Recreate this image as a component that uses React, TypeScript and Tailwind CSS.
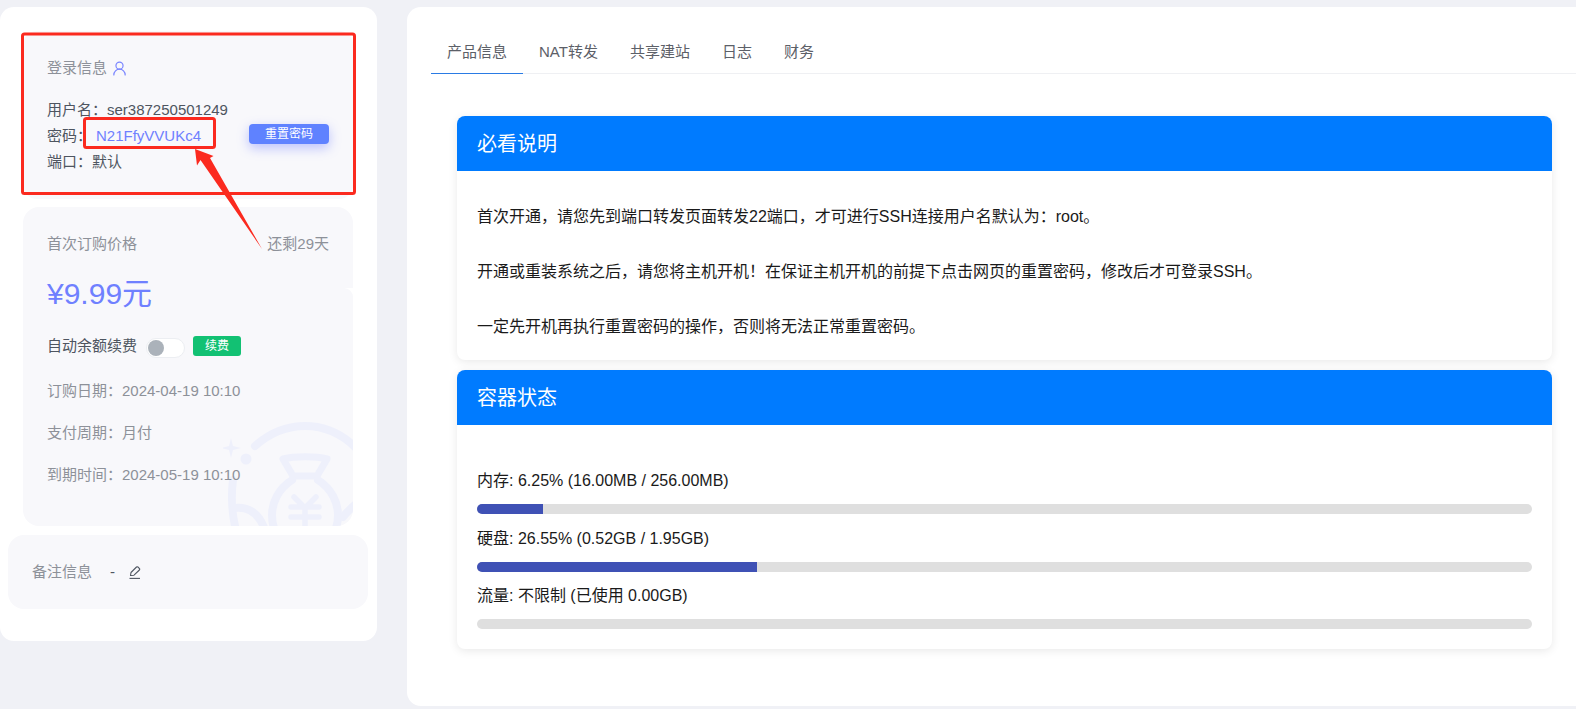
import React from "react";
import { UserRound } from "lucide-react";

const font = "font-['Liberation_Sans','Noto_Sans_CJK_SC',sans-serif]";

function MoneyBag() {
    return (
        <svg className="absolute right-0 bottom-0 h-[110px] w-[130px]" viewBox="223 416 130 110" fill="none" stroke="#eef0fb" strokeLinecap="round" strokeLinejoin="round">
            <path d="M255 446 C272 431 290 426 305 426 C325 426 342 434 356 448" strokeWidth="8" />
            <circle cx="246" cy="459" r="5.5" fill="#eef0fb" stroke="none" />
            <path d="M231 438 L233 446 L241 448 L233 450 L231 458 L229 450 L221 448 L229 446 Z" fill="#eef0fb" stroke="none" />
            <path d="M233 480 C231 495 232 515 236 530" strokeWidth="8" />
            <path d="M234 508 C248 506 259 513 265 530" strokeWidth="8" />
            <path d="M283 459 C295 456 316 456 327 459 L317 476 L293 476 Z" strokeWidth="7" />
            <path d="M292 480 C278 489 272 503 272 515 C272 520 273 526 275 530" strokeWidth="8" />
            <path d="M318 480 C332 489 338 503 338 515 C338 520 337 526 335 530" strokeWidth="8" />
            <path d="M343 517 C347 512 351 508 356 504" strokeWidth="8" />
            <path d="M294 497 L305 508 L316 497 M291 507 H319 M291 517 H319 M305 508 V530" strokeWidth="5.5" />
        </svg>
    );
}

function Annotation() {
    return (
        <svg className="pointer-events-none absolute top-0 left-0 z-20 h-[709px] w-[400px]" viewBox="0 0 400 709" fill="none">
            <rect x="22.5" y="34" width="332" height="159.5" rx="2" stroke="#fb2a1f" strokeWidth="3" />
            <rect x="84.5" y="118.5" width="130" height="29" rx="2" stroke="#fb2a1f" strokeWidth="3" />
            <path d="M195 149 L213.5 156 L210 158 L262 249 L200.5 160 L197 165.5 Z" fill="#fb2a1f" />
        </svg>
    );
}

function Bar({ label, value }: { label: string; value: number }) {
    return (
        <div>
            <div className="h-[24px] text-[16px] leading-[24px] text-[#1a1a1a]">{label}</div>
            <div className="mt-[11px] h-[10px] overflow-hidden rounded-[5px] bg-[#dfdfdf]">
                <div className="h-full bg-[#3f51b5]" style={{ width: `${value}%` }} />
            </div>
        </div>
    );
}

export default function App() {
    return (
        <div className={`relative flex h-[709px] overflow-hidden bg-[#f0f1f6] pt-[7px] ${font}`}>
            <div className="h-[634px] w-[377px] shrink-0 rounded-[14px] bg-white pt-[24px] pr-[9px] pl-[8px]">
                <div className="mx-[15px] h-[168px] rounded-[14px] bg-[#f8f8fb] pt-[27px] pl-[24px]">
                    <div className="flex h-[20px] items-center text-[15px] text-[#8d9199]">
                        登录信息
                        <UserRound className="ml-[4px] h-[17px] w-[17px] text-[#7a86ff]" strokeWidth={1.7} />
                    </div>
                    <div className="mt-[19px] flex items-center text-[15px] leading-[26px] text-[#4e5560]">
                        <div className="w-[202px]">
                            <div>用户名：ser387250501249</div>
                            <div>
                                密码：<span className="ml-[4px] text-[#6f80ff]">N21FfyVVUKc4</span>
                            </div>
                            <div>端口：默认</div>
                        </div>
                        <button className="mb-[4px] h-[20px] w-[80px] rounded-[4px] bg-[#5f82ff] text-[12px] leading-[20px] text-white shadow-[0_4px_12px_rgba(95,110,255,0.4)]">重置密码</button>
                    </div>
                </div>
                <div className="relative mx-[15px] mt-[8px] h-[319px] overflow-hidden rounded-[16px]">
                    <div className="relative z-10 h-[81px] bg-[#f8f8fb] px-[24px] pt-[27px]">
                        <div className="flex h-[20px] items-center justify-between text-[15px] text-[#8d9199]">
                            <span>首次订购价格</span>
                            <span>还剩29天</span>
                        </div>
                        <div className="mt-[22px] h-[36px] text-[30px] leading-[36px] text-[#6f80ff]">¥9.99元</div>
                    </div>
                    <div className="relative h-[238px] rounded-tr-[9px] bg-[#f8f8fb] px-[24px] pt-[48px]">
                        <MoneyBag />
                        <div className="relative flex h-[20px] items-center text-[15px] text-[#4e5560]">
                            自动余额续费
                            <span className="mt-[4px] ml-[9px] flex h-[20px] w-[39px] items-center rounded-full border border-[#eceef2] bg-white pl-[1px]">
                                <span className="h-[16px] w-[16px] rounded-full bg-[#abb2ba]" />
                            </span>
                            <span className="ml-[8px] h-[20px] w-[48px] rounded-[3px] bg-[#12c173] text-center text-[12px] leading-[20px] text-white">续费</span>
                        </div>
                        <div className="relative mt-[25px] h-[20px] text-[15px] leading-[20px] text-[#8d9199]">订购日期：2024-04-19 10:10</div>
                        <div className="relative mt-[22px] h-[20px] text-[15px] leading-[20px] text-[#8d9199]">支付周期：月付</div>
                        <div className="relative mt-[22px] h-[20px] text-[15px] leading-[20px] text-[#8d9199]">到期时间：2024-05-19 10:10</div>
                    </div>
                </div>
                <div className="mt-[9px] flex h-[74px] items-center rounded-[16px] bg-[#f8f8fb] pl-[24px] text-[15px]">
                    <span className="text-[#8d9199]">备注信息</span>
                    <span className="ml-[18px] text-[#4e5560]">-</span>
                    <svg className="ml-[14px] h-[13px] w-[11.5px] text-[#4e5560]" viewBox="0 0 11.5 13" fill="none" stroke="currentColor" strokeWidth="1.1" strokeLinejoin="round">
                        <path d="M1.5 9.5 L2 6.5 L7.5 1 Q8.2 .4 8.9 1 L10.5 2.6 Q11 3.3 10.4 4 L5 9.2 Z" />
                        <path d="M0.5 12.4 H11" />
                    </svg>
                </div>
            </div>

            <div className="ml-[30px] h-[699px] flex-1 rounded-l-[14px] bg-white pt-[24px] pl-[24px]">
                <div className="flex h-[43px] border-b border-[#eff0f3] text-[15px] text-[#5c6068]">
                    <div className="-mb-px flex h-[43px] w-[92px] items-center justify-center border-b border-[#2a7be4]">产品信息</div>
                    <div className="flex h-[42px] items-center px-[16px]">NAT转发</div>
                    <div className="flex h-[42px] items-center px-[16px]">共享建站</div>
                    <div className="flex h-[42px] items-center px-[16px]">日志</div>
                    <div className="flex h-[42px] items-center px-[16px]">财务</div>
                </div>
                <div className="mt-[42px] mr-[24px] ml-[26px]">
                    <div className="h-[244px] overflow-hidden rounded-[8px] bg-white shadow-[0_2px_10px_rgba(0,0,0,0.09)]">
                        <div className="flex h-[55px] items-center bg-[#007bff] px-[20px] text-[20px] text-white">必看说明</div>
                        <div className="px-[20px] pt-[34px] text-[16px] leading-[24px] text-[#1a1a1a]">
                            <p>首次开通，请您先到端口转发页面转发22端口，才可进行SSH连接用户名默认为：root。</p>
                            <p className="mt-[31px]">开通或重装系统之后，请您将主机开机！在保证主机开机的前提下点击网页的重置密码，修改后才可登录SSH。</p>
                            <p className="mt-[31px]">一定先开机再执行重置密码的操作，否则将无法正常重置密码。</p>
                        </div>
                    </div>
                    <div className="mt-[10px] h-[279px] overflow-hidden rounded-[8px] bg-white shadow-[0_2px_10px_rgba(0,0,0,0.09)]">
                        <div className="flex h-[55px] items-center bg-[#007bff] px-[20px] text-[20px] text-white">容器状态</div>
                        <div className="space-y-[12.5px] px-[20px] pt-[44px]">
                            <Bar label="内存: 6.25% (16.00MB / 256.00MB)" value={6.25} />
                            <Bar label="硬盘: 26.55% (0.52GB / 1.95GB)" value={26.55} />
                            <Bar label="流量: 不限制 (已使用 0.00GB)" value={0} />
                        </div>
                    </div>
                </div>
            </div>
            <Annotation />
        </div>
    );
}
